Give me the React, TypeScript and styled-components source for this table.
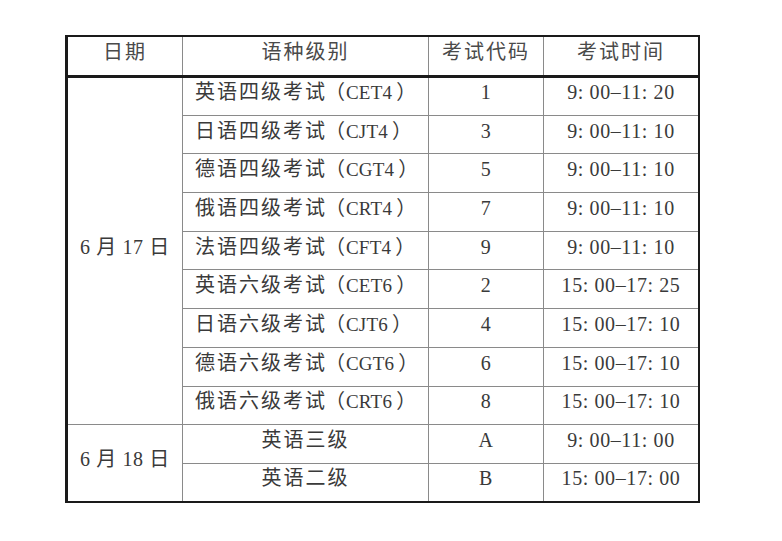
import React from "react";
import styled, { createGlobalStyle } from "styled-components";

const Global = createGlobalStyle`
  html, body { margin: 0; padding: 0; background: #ffffff; }
  body { width: 782px; height: 541px; overflow: hidden; }
`;

const Page = styled.div`
  padding: 35px 0 0 65px;
`;

const Table = styled.table`
  border-collapse: collapse;
  table-layout: fixed;
  width: 627px;
  border: 3px solid #1a1a1a;
  border-top-width: 2px;
  border-bottom-width: 2px;
  border-right-width: 2px;
  font-family: "Liberation Serif", "Noto Sans CJK SC", serif;
  font-feature-settings: "halt";
  font-size: 20px;
  color: #3a3a3a;
  letter-spacing: 2px;
`;

const HeadCell = styled.th<{ $w: number }>`
  width: ${(p) => p.$w}px;
  height: 30px;
  padding: 0 0 8px;
  font-weight: 400;
  color: #4a4a4a;
  text-align: center;
  vertical-align: middle;
  border-left: 1px solid #8a8a8a;
  border-bottom: 3px solid #1a1a1a;
  line-height: 1;
`;

const Row = styled.tr`
  height: 38.7px;
`;

const Cell = styled.td<{ $align?: "left" | "center" }>`
  padding: ${(p) => (p.$align === "left" ? "0 0 8px 12px" : "0 0 8px")};
  text-align: ${(p) => p.$align ?? "center"};
  vertical-align: middle;
  border: 1px solid #8a8a8a;
  line-height: 1;
  white-space: nowrap;
`;

const Num = styled.span`
  letter-spacing: 0.6px;
`;

const Code = styled.span`
  margin-left: 8px;
  letter-spacing: 1px;
`;

const Latin = styled.span`
  font-size: 19px;
  letter-spacing: 0.2px;
  margin-right: 4px;
`;

type Exam = { name: string; code: string; time: string; date?: string; span?: number };

const rows: Exam[] = [
  { name: "英语四级考试", code: "CET4", time: "9: 00–11: 20", date: "17", span: 9 },
  { name: "日语四级考试", code: "CJT4", time: "9: 00–11: 10" },
  { name: "德语四级考试", code: "CGT4", time: "9: 00–11: 10" },
  { name: "俄语四级考试", code: "CRT4", time: "9: 00–11: 10" },
  { name: "法语四级考试", code: "CFT4", time: "9: 00–11: 10" },
  { name: "英语六级考试", code: "CET6", time: "15: 00–17: 25" },
  { name: "日语六级考试", code: "CJT6", time: "15: 00–17: 10" },
  { name: "德语六级考试", code: "CGT6", time: "15: 00–17: 10" },
  { name: "俄语六级考试", code: "CRT6", time: "15: 00–17: 10" },
];

const codes = ["1", "3", "5", "7", "9", "2", "4", "6", "8"];

export default function App() {
  return (
    <>
      <Global />
      <Page>
        <Table>
          <thead>
            <tr>
              <HeadCell $w={114}>日期</HeadCell>
              <HeadCell $w={245}>语种级别</HeadCell>
              <HeadCell $w={114}>考试代码</HeadCell>
              <HeadCell $w={154}>考试时间</HeadCell>
            </tr>
          </thead>
          <tbody>
            {rows.map((r, i) => (
              <Row key={r.code}>
                {r.date && (
                  <Cell rowSpan={r.span}>
                    <Num>6 月 {r.date} 日</Num>
                  </Cell>
                )}
                <Cell $align="left">
                  {r.name}
                  <Code>
                    （<Latin>{r.code}</Latin>）
                  </Code>
                </Cell>
                <Cell>
                  <Num>{codes[i]}</Num>
                </Cell>
                <Cell>
                  <Num>{r.time}</Num>
                </Cell>
              </Row>
            ))}
            <Row>
              <Cell rowSpan={2}>
                <Num>6 月 18 日</Num>
              </Cell>
              <Cell>英语三级</Cell>
              <Cell>
                <Num>A</Num>
              </Cell>
              <Cell>
                <Num>9: 00–11: 00</Num>
              </Cell>
            </Row>
            <Row>
              <Cell>英语二级</Cell>
              <Cell>
                <Num>B</Num>
              </Cell>
              <Cell>
                <Num>15: 00–17: 00</Num>
              </Cell>
            </Row>
          </tbody>
        </Table>
      </Page>
    </>
  );
}
